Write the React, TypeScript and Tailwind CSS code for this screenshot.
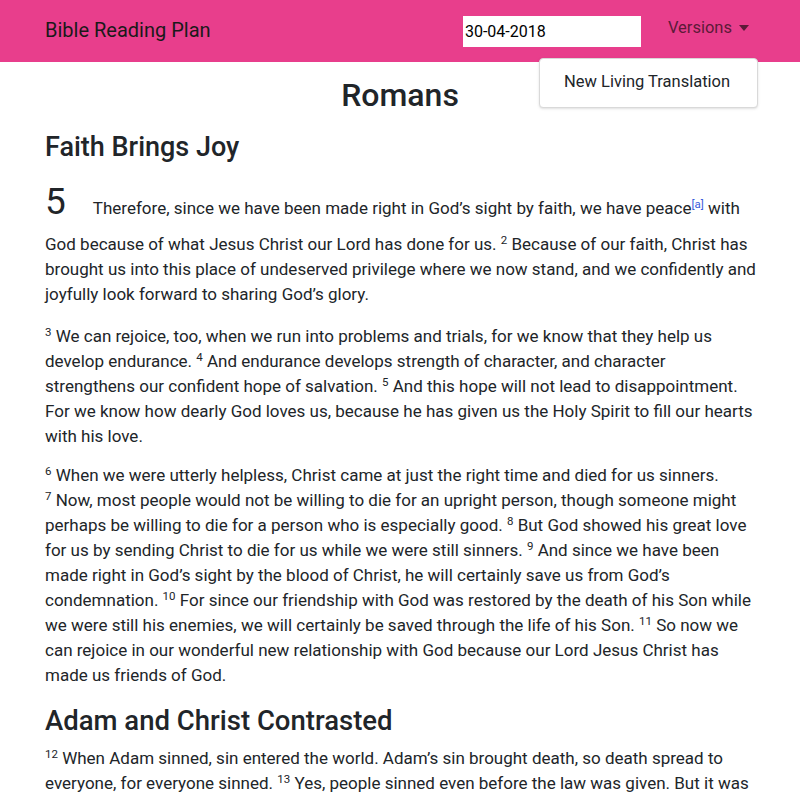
import { Fragment, ReactNode } from "react";

const font = { fontFamily: "Roboto, 'Liberation Sans', sans-serif" };

function V({ n }: { n: number }) {
  return (
    <>
      <sup className="text-[11.5px]">{n}</sup>{" "}
    </>
  );
}

function Lines({ lines }: { lines: ReactNode[] }) {
  return (
    <>
      {lines.map((l, i) => (
        <Fragment key={i}>
          {l}
          {i < lines.length - 1 && <br />}
        </Fragment>
      ))}
    </>
  );
}

export default function App() {
  return (
    <div className="h-[800px] overflow-hidden bg-white text-[#212529] relative" style={font}>
      <nav className="h-[62px] bg-[#e83e8c] flex items-center pl-[45px] pr-[51px]">
        <span className="text-[20px] text-[#1a1a1a] -mt-[2px]">Bible Reading Plan</span>
        <div className="ml-auto flex items-center">
          <input
            readOnly
            value="30-04-2018"
            className="w-[178px] h-[31px] bg-white px-[2px] text-[16px] text-black outline-none"
          />
          <div className="relative ml-[27px] -mt-[6px]">
            <button className="flex items-center gap-[7px] text-[16.5px] text-[#5c1a38]">
              Versions
              <span className="w-0 h-0 border-l-[5px] border-r-[5px] border-t-[6px] border-l-transparent border-r-transparent border-t-[#5c1a38]" />
            </button>
            <div className="absolute right-[-9px] top-[42px] w-[219px] h-[50px] bg-white border border-[#d9d9d9] rounded-[4px] shadow-sm flex items-center pl-[24px] text-[16.5px] text-[#212529] z-10">
              New Living Translation
            </div>
          </div>
        </div>
      </nav>

      <main className="px-[45px] text-[17px] leading-[25px] whitespace-nowrap">
        <h1 className="text-center text-[32px] leading-[38px] font-medium mt-[14px] mb-[16px]">Romans</h1>
        <h2 className="text-[27px] leading-[34px] font-medium mb-[8px]">Faith Brings Joy</h2>
        <p className="mb-[17px]">
          <Lines
            lines={[
              <>
                <span className="text-[37px] leading-[60px] mr-[27px]">5</span>
                Therefore, since we have been made right in God’s sight by faith, we have peace
                <sup className="text-[11.5px] text-[#3b5bdb]">[a]</sup> with
              </>,
              <>
                God because of what Jesus Christ our Lord has done for us. <V n={2} />Because of our faith, Christ has
              </>,
              "brought us into this place of undeserved privilege where we now stand, and we confidently and",
              "joyfully look forward to sharing God’s glory.",
            ]}
          />
        </p>
        <p className="mb-[14px]">
          <Lines
            lines={[
              <>
                <V n={3} />We can rejoice, too, when we run into problems and trials, for we know that they help us
              </>,
              <>
                develop endurance. <V n={4} />And endurance develops strength of character, and character
              </>,
              <>
                strengthens our confident hope of salvation. <V n={5} />And this hope will not lead to disappointment.
              </>,
              "For we know how dearly God loves us, because he has given us the Holy Spirit to fill our hearts",
              "with his love.",
            ]}
          />
        </p>
        <p className="mb-[16px]">
          <Lines
            lines={[
              <>
                <V n={6} />When we were utterly helpless, Christ came at just the right time and died for us sinners.
              </>,
              <>
                <V n={7} />Now, most people would not be willing to die for an upright person, though someone might
              </>,
              <>
                perhaps be willing to die for a person who is especially good. <V n={8} />But God showed his great love
              </>,
              <>
                for us by sending Christ to die for us while we were still sinners. <V n={9} />And since we have been
              </>,
              "made right in God’s sight by the blood of Christ, he will certainly save us from God’s",
              <>
                condemnation. <V n={10} />For since our friendship with God was restored by the death of his Son while
              </>,
              <>
                we were still his enemies, we will certainly be saved through the life of his Son. <V n={11} />So now we
              </>,
              "can rejoice in our wonderful new relationship with God because our Lord Jesus Christ has",
              "made us friends of God.",
            ]}
          />
        </p>
        <h2 className="text-[27.5px] leading-[34px] font-medium mb-[8px]">Adam and Christ Contrasted</h2>
        <p>
          <Lines
            lines={[
              <>
                <V n={12} />When Adam sinned, sin entered the world. Adam’s sin brought death, so death spread to
              </>,
              <>
                everyone, for everyone sinned. <V n={13} />Yes, people sinned even before the law was given. But it was
              </>,
              <>
                not counted as sin because there was not yet any law to break. <V n={14} />Still, everyone died—from
              </>,
            ]}
          />
        </p>
      </main>
    </div>
  );
}
